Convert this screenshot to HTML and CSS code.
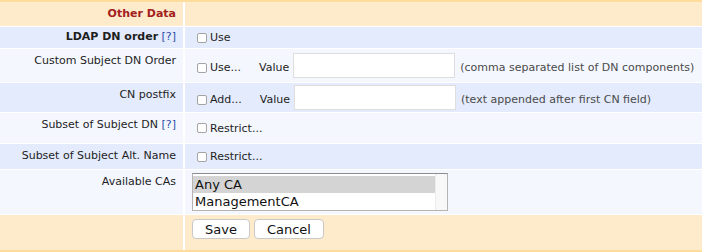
FILE: index.html
```html
<!DOCTYPE html>
<html lang="en">
<head>
    <meta charset="UTF-8">
    <meta name="viewport" content="width=device-width, initial-scale=1.0">
    <title>Other Data</title>
    <link rel="stylesheet" href="styles.css">
</head>
<body class="body">
    <div class="form-table">
        <div class="label head">Other Data</div>
        <div class="field head"></div>

        <div class="label alt short"><b>LDAP DN order</b> <a class="help" href="#">[?]</a></div>
        <div class="field alt">
            <label class="check"><input type="checkbox"> <span>Use</span></label>
        </div>

        <div class="label">Custom Subject DN Order</div>
        <div class="field with-input">
            <label class="check"><input type="checkbox"> <span>Use...</span></label>
            <span class="value">Value</span>
            <input class="text" type="text">
            <span class="hint">(comma separated list of DN components)</span>
        </div>

        <div class="label alt">CN postfix</div>
        <div class="field alt with-input">
            <label class="check"><input type="checkbox"> <span>Add...</span></label>
            <span class="value">Value</span>
            <input class="text" type="text">
            <span class="hint">(text appended after first CN field)</span>
        </div>

        <div class="label">Subset of Subject DN <a class="help" href="#">[?]</a></div>
        <div class="field">
            <label class="check"><input type="checkbox"> <span>Restrict...</span></label>
        </div>

        <div class="label alt">Subset of Subject Alt. Name</div>
        <div class="field alt">
            <label class="check"><input type="checkbox"> <span>Restrict...</span></label>
        </div>

        <div class="label">Available CAs</div>
        <div class="field">
            <div class="listbox">
                <div class="options">
                    <div class="option selected">Any CA</div>
                    <div class="option">ManagementCA</div>
                </div>
                <div class="scroll"></div>
            </div>
        </div>

        <div class="label head"></div>
        <div class="field head buttons">
            <button class="btn">Save</button>
            <button class="btn">Cancel</button>
        </div>
    </div>
</body>
</html>
```

FILE: styles.css
```css
.body {
    margin: 0;
    background-color: #ffffff;
    font-family: "DejaVu Sans", Verdana, sans-serif;
    font-size: 11px;
    color: #1e1e1e;
}

.form-table {
    display: grid;
    grid-template-columns: 183px 1fr;
    grid-template-rows: 24px 21px 33px 29px 30px 25px 44px 35px;
    column-gap: 2px;
    row-gap: 1px;
    background-color: #ffffff;
    border-top: 2px solid #fddc9c;
    border-bottom: 2px solid #fddc9c;
}

.label {
    background-color: #f4f7fe;
    text-align: right;
    padding: 5px 7px 0 0;
    line-height: 14px;
}

.field {
    background-color: #f4f7fe;
    display: flex;
    align-items: center;
    padding-left: 7px;
}

.alt {
    background-color: #e4ebfc;
}

.head {
    background-color: #fdebcc;
}

.label.head {
    color: #a3201c;
    font-weight: bold;
}

.label.short {
    padding-top: 3px;
}

.help {
    color: #2c4ea6;
    text-decoration: none;
}

.check {
    display: flex;
    align-items: center;
}

.check input {
    appearance: none;
    width: 10px;
    height: 10px;
    margin: 0 3px 0 5px;
    border: 1px solid #a4a4a4;
    border-radius: 2px;
    background-color: #ffffff;
}

/* text next to an input box sits a bit lower */
.with-input .check,
.with-input .value,
.with-input .hint {
    padding-top: 4px;
}

.value {
    margin-left: 18px;
}

.text {
    box-sizing: border-box;
    width: 162px;
    height: 25px;
    margin: 0 0 0 4px;
    border: 1px solid #dedede;
    background-color: #ffffff;
    outline: none;
}

.hint {
    margin-left: 5px;
    color: #4a4a4a;
}

.listbox {
    display: flex;
    width: 256px;
    height: 38px;
    box-sizing: border-box;
    border: 1px solid #b4b4b4;
    border-top-color: #8c8c8c;
    background-color: #ffffff;
    font-size: 13px;
    color: #111111;
}

.options {
    flex: 1;
    padding-top: 2px;
}

.option {
    height: 17px;
    line-height: 17px;
    padding: 0 2px;
}

.option.selected {
    background-color: #d4d4d4;
}

.scroll {
    width: 11px;
    background-color: #f8f8f8;
    border-left: 1px solid #ececec;
}

.buttons {
    align-items: flex-start;
    padding-top: 4px;
    gap: 4px;
}

.btn {
    height: 20px;
    padding: 0 12px;
    border: 1px solid #c8c8c8;
    border-radius: 4px;
    background-color: #ffffff;
    font-family: "DejaVu Sans", Verdana, sans-serif;
    font-size: 13px;
    color: #111111;
}
```
